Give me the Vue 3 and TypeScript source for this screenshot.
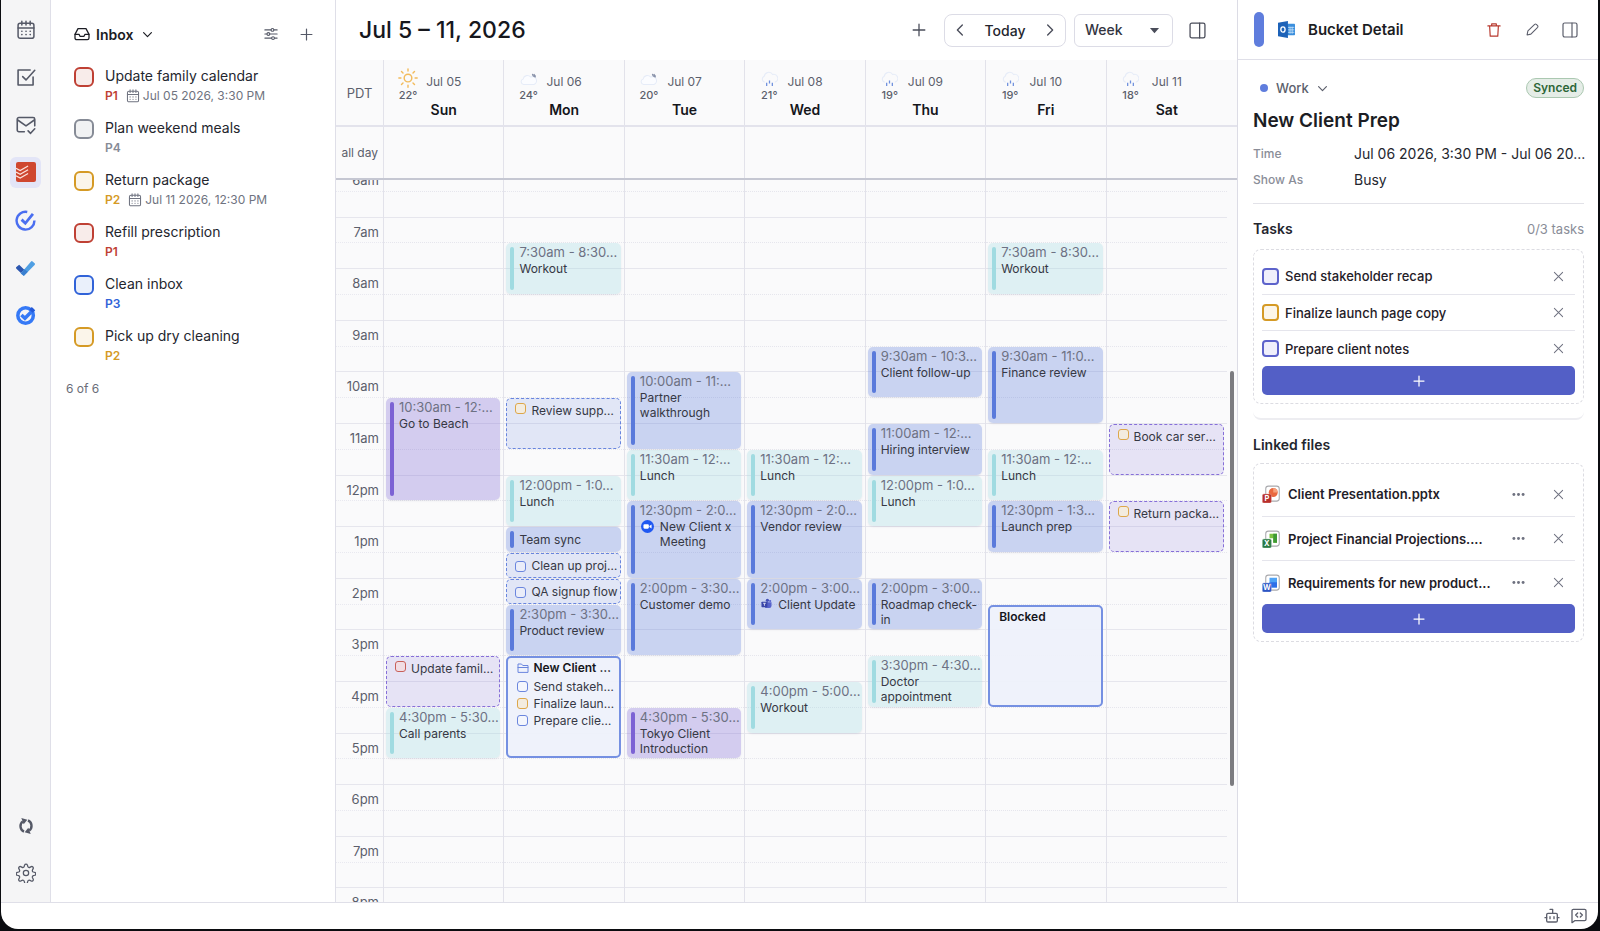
<script setup lang="ts">
import { computed, h, ref, type FunctionalComponent } from 'vue'

const stroke = (body: string, width = 1.5) =>
  `<g fill="none" stroke="currentColor" stroke-width="${width}" stroke-linecap="round" stroke-linejoin="round">${body}</g>`

const office = (tile: string, badge: string, letter: string, art: string) =>
  `<rect x="5" y="1.5" width="18" height="20" rx="3.5" fill="#fff" stroke="#a9a9ad" stroke-width="1.4"/>${art}
   <rect x="0.5" y="12" width="12" height="12" rx="2" fill="${badge}" stroke="${tile}" stroke-width=".6"/>
   <text x="6.5" y="21.6" font-size="10" font-weight="700" font-family="Inter, sans-serif" text-anchor="middle" fill="#fff">${letter}</text>`

const icons: Record<string, string> = {
  calendar: stroke(
    '<rect x="2.5" y="4" width="19" height="18" rx="2.5"/><path d="M2.5 9.5h19M7 1.5V6M12 1.5V6M17 1.5V6"/><path d="M7 13.5h.1M12 13.5h.1M17 13.5h.1M7 17.5h.1M12 17.5h.1M17 17.5h.1" stroke-width="2"/>', 1.8),
  taskCheck: stroke('<path d="M20.5 12v9.500h-18V3.500H17"/><path d="M8 11.500l4 4L22.500 4"/>', 1.9),
  mailCheck: stroke('<path d="M10 20H3.500A2 2 0 0 1 1.500 18V5a2 2 0 0 1 2-2h17a2 2 0 0 1 2 2v8"/><path d="M2 6l10 7 10-7"/><path d="M14.500 19l3 3 5-5.500"/>', 1.9),
  todoist:
    '<rect width="24" height="24" rx="2.500" fill="#cf4730"/><g fill="none" stroke="#fbe3de" stroke-width="1.5"><path d="M0 7.500l5 2.800 9.500-5.600"/><path d="M0 12l5 2.800 9.500-5.600"/><path d="M0 16.500l5 2.800 9.500-5.600"/></g>',
  ticktick:
    '<path d="M14 2.200A10.200 10.200 0 1 0 22.200 12" fill="none" stroke="#4a6ef0" stroke-width="2.800"/><path d="M7.500 11l4.300 4.200L20.500 4.500" fill="none" stroke="#4a6ef0" stroke-width="3.200"/>',
  msTodo:
    '<path d="M4 8.500l6.500 6.300-4.300 4.300L0.500 13.500a1.400 1.400 0 0 1 0-2z" fill="#2c57b0"/><path d="M6 19.500L19 4.300a1.500 1.500 0 0 1 2 0l2.500 2.400a1.400 1.400 0 0 1 0 2L11 21.500a1.600 1.600 0 0 1-2.500 0z" fill="#4f9fe3"/><path d="M6 19.300l4.500-5 4.500 3.200-4 4a1.600 1.600 0 0 1-2.500 0z" fill="#3a7fd0"/>',
  googleTasks:
    '<circle cx="11.500" cy="12.500" r="9.300" fill="none" stroke="#3579f6" stroke-width="4.200"/><path d="M6.500 12l4.200 4L21.500 5" fill="none" stroke="#3579f6" stroke-width="4.200"/><path d="M19 2.500l3.800 3.800-3 3-3.800-3.800z" fill="#2459d8"/>',
  sync:
    '<g fill="none" stroke="currentColor" stroke-width="3.600"><path d="M9 20.300A9 9 0 0 1 7.200 5"/><path d="M15 3.700A9 9 0 0 1 16.800 19"/></g><path d="M5 0l9 2.500L8.500 9.500z" fill="currentColor"/><path d="M19 24l-9-2.500 5.500-7z" fill="currentColor"/>',
  gear: stroke(
    '<circle cx="12" cy="12" r="3.200"/><path d="M10.300 2.500a1.800 1.800 0 0 1 3.400 0l.5 1.700a1.800 1.800 0 0 0 2.500 1l1.500-.8a1.800 1.800 0 0 1 2.400 2.400l-.8 1.500a1.800 1.800 0 0 0 1 2.500l1.700.5a1.800 1.800 0 0 1 0 3.400l-1.700.5a1.800 1.800 0 0 0-1 2.500l.8 1.500a1.800 1.800 0 0 1-2.400 2.400l-1.500-.8a1.800 1.800 0 0 0-2.500 1l-.5 1.700a1.800 1.800 0 0 1-3.400 0l-.5-1.700a1.800 1.800 0 0 0-2.500-1l-1.500.8a1.800 1.800 0 0 1-2.400-2.400l.8-1.500a1.800 1.800 0 0 0-1-2.500l-1.700-.5a1.800 1.800 0 0 1 0-3.400l1.700-.5a1.800 1.800 0 0 0 1-2.500l-.8-1.500a1.800 1.800 0 0 1 2.400-2.400l1.500.8a1.800 1.800 0 0 0 2.500-1z"/>'),
  inbox: stroke('<path d="M1.500 12.500h6l1.500 3h6l1.500-3h6"/><path d="M6 4h12l4.500 8.500V18a2.500 2.500 0 0 1-2.500 2.500H4A2.500 2.500 0 0 1 1.500 18v-5.500z"/>', 1.9),
  chevronDown: stroke('<path d="M3.500 8l8.500 8.500L20.500 8"/>', 2.6),
  chevronLeft: stroke('<path d="M16 3.500L7.500 12l8.500 8.500"/>', 2.3),
  chevronRight: stroke('<path d="M8 3.500l8.500 8.500L8 20.500"/>', 2.3),
  sliders: stroke(
    '<path d="M1.500 5h10.500M17 5h5.500M1.500 12h3.500M10 12h12.500M1.500 19h11.500M18 19h4.500"/><circle cx="14.500" cy="5" r="2.400"/><circle cx="7.500" cy="12" r="2.400"/><circle cx="15.500" cy="19" r="2.400"/>', 1.9),
  plus: stroke('<path d="M12 2v20M2 12h20"/>', 2.5),
  thinPlus: stroke('<path d="M12 2v20M2 12h20"/>', 2.2),
  close: stroke('<path d="M3 3l18 18M21 3L3 21"/>', 2.2),
  caret: '<path d="M2 6.500h20L12 18z" fill="currentColor"/>',
  panel: stroke('<rect x="1.500" y="1.500" width="21" height="21" rx="2.500"/><path d="M15 1.500v21"/>', 1.8),
  trash: stroke('<path d="M1.500 5h21M8 5V1.500h8V5M4.500 5l1 17.500h13l1-17.500"/>', 2),
  pencil: stroke('<path d="M2 22l1.500-7.500L16 2.500q1.500-1.200 3 0l2.500 2.500q1.200 1.500 0 3L9 20.500z"/>', 2),
  dots: '<g fill="currentColor"><circle cx="3.500" cy="12" r="2.700"/><circle cx="12" cy="12" r="2.700"/><circle cx="20.500" cy="12" r="2.700"/></g>',
  robot: stroke('<path d="M9 2h4v5"/><rect x="4" y="8" width="16" height="13" rx="2"/><path d="M1.500 14.500H4M20 14.500h2.500M9 13v3M15 13v3"/>', 2),
  codeBubble: stroke('<path d="M1.500 22V4a2 2 0 0 1 2-2h17a2 2 0 0 1 2 2v13a2 2 0 0 1-2 2h-15z"/><path d="M10 7.500l-3 3 3 3M14 7.500l3 3-3 3"/>', 2),
  folder: stroke('<path d="M2 20V4h7l2.500 3H22v13zM2 11h20"/>', 2),
  outlook:
    '<rect x="9" y="4" width="15" height="16" rx="1" fill="#3b8fdd"/><path d="M14 9h9M14 12.500h9M14 16h9M17 8v10M20 8v10" stroke="#d5e8fa" stroke-width="1"/><path d="M0 2.500L14 0v24L0 21.500z" fill="#1d62b8"/><ellipse cx="7" cy="12" rx="3" ry="3.800" fill="none" stroke="#fff" stroke-width="1.900"/>',
  zoom:
    '<circle cx="12" cy="12" r="12" fill="#1f58f2"/><rect x="4.500" y="8" width="10" height="8" rx="2" fill="#fff"/><path d="M15.500 11l4-2.700v7.400l-4-2.700z" fill="#fff"/>',
  teams:
    '<circle cx="14" cy="5" r="3.500" fill="#4350b8"/><circle cx="20" cy="6.500" r="2.400" fill="#5662cc"/><path d="M9 9h14v8a5 5 0 0 1-5 5H9z" fill="#5662cc"/><rect x="1" y="8" width="13" height="12" rx="1.500" fill="#3a46a8"/><path d="M4.500 11.500h6M7.500 11.500V17" stroke="#fff" stroke-width="1.600"/>',
  sun: '<g fill="none" stroke="#f2bb5c" stroke-width="1.700" stroke-linecap="round"><circle cx="12" cy="12" r="4.600"/><path d="M12 1v2.500M12 20.500V23M1 12h2.500M20.500 12H23M4.200 4.200L6 6M18 18l1.800 1.800M4.200 19.800L6 18M18 6l1.800-1.800"/></g>',
  cloudy:
    '<path d="M5 19a4 4 0 0 1-.5-7.800 6 6 0 0 1 10.500-2.700A5.300 5.300 0 0 1 20 19z" fill="#fbfcff" stroke="#e6ecf8" stroke-width="1.500"/><path d="M17.500 4q.5 4 5 4.500M19.500 4.500l2.500 3" fill="none" stroke="#8a93aa" stroke-width="1.600"/>',
  rain:
    '<path d="M5.500 16a4.500 4.500 0 0 1-1-8.500 6.500 6.500 0 0 1 12-2.500 5.500 5.500 0 0 1 3 11" fill="none" stroke="#e6ecf8" stroke-width="1.500"/><path d="M8 16.500v4.500M12 13.500v4M16 16.500v4.500" stroke="#6f90de" stroke-width="1.800"/>',
  pptx: office('#e8a8a0', '#b8302c', 'P', '<circle cx="15" cy="10" r="6" fill="#e9683f"/><path d="M15 4a6 6 0 0 1 6 6h-6z" fill="#f6a07c"/>'),
  xlsx: office('#a8d0b0', '#2b7a45', 'X', '<path d="M10 5h10v12h-5V11h-5z" fill="#7cc242"/><path d="M15 5h5v12h-5z" fill="#3f9a34"/>'),
  docx: office('#a8b8e8', '#2d55c4', 'W', '<rect x="10" y="5" width="10" height="13" fill="#4fa3f5"/><path d="M10 11h10v7H10z" fill="#2e6fe8"/>'),
}

const Icon: FunctionalComponent<{ name: string; size?: number }> = (props) =>
  h('svg', {
    class: 'icon',
    viewBox: '0 0 24 24',
    width: props.size ?? 16,
    height: props.size ?? 16,
    'aria-hidden': 'true',
    innerHTML: icons[props.name],
  })
Icon.props = ['name', 'size']

const apps = [
  { icon: 'calendar', label: 'Calendar', size: 20 },
  { icon: 'taskCheck', label: 'Tasks', size: 20 },
  { icon: 'mailCheck', label: 'Mail', size: 20 },
  { icon: 'todoist', label: 'Todoist', size: 20 },
  { icon: 'ticktick', label: 'TickTick', size: 21 },
  { icon: 'msTodo', label: 'Microsoft To Do', size: 19 },
  { icon: 'googleTasks', label: 'Google Tasks', size: 20 },
]
const activeApp = ref('Todoist')

interface InboxTask { title: string; priority: number; due?: string; done: boolean }
const inbox = ref<InboxTask[]>([
  { title: 'Update family calendar', priority: 1, due: 'Jul 05 2026, 3:30 PM', done: false },
  { title: 'Plan weekend meals', priority: 4, done: false },
  { title: 'Return package', priority: 2, due: 'Jul 11 2026, 12:30 PM', done: false },
  { title: 'Refill prescription', priority: 1, done: false },
  { title: 'Clean inbox', priority: 3, done: false },
  { title: 'Pick up dry cleaning', priority: 2, done: false },
])
const inboxCount = computed(() => `${inbox.value.length} of ${inbox.value.length}`)

// Shortens a label to a fixed number of characters followed by dots.
const shorten = (text: string, max: number) => (text.length > max ? text.slice(0, max) + '...' : text)

interface CalEvent {
  kind: 'timed' | 'task' | 'bucket'
  tone: 'blue' | 'teal' | 'purple'
  start: number
  end: number
  title: string
  time?: string
  box?: string
  app?: string
  items?: { title: string; box: string }[]
}
const timed = (tone: CalEvent['tone'], start: number, end: number, title: string, time?: string, app?: string): CalEvent =>
  ({ kind: 'timed', tone, start, end, title, time, app })
const task = (tone: CalEvent['tone'], start: number, end: number, title: string, box: string): CalEvent =>
  ({ kind: 'task', tone, start, end, title, box })

const days: { date: string; name: string; weather: string; temp: string; events: CalEvent[] }[] = [
  { date: 'Jul 05', name: 'Sun', weather: 'sun', temp: '22°', events: [
    timed('purple', 10.5, 12.5, 'Go to Beach', '10:30am - 12:30pm'),
    task('purple', 15.5, 16.5, 'Update family calendar', 'red'),
    timed('teal', 16.5, 17.5, 'Call parents', '4:30pm - 5:30pm'),
  ] },
  { date: 'Jul 06', name: 'Mon', weather: 'cloudy', temp: '24°', events: [
    timed('teal', 7.5, 8.5, 'Workout', '7:30am - 8:30am'),
    task('blue', 10.5, 11.5, 'Review support queue', 'amber'),
    timed('teal', 12, 13, 'Lunch', '12:00pm - 1:00pm'),
    timed('blue', 13, 13.5, 'Team sync'),
    task('blue', 13.5, 14, 'Clean up project board', 'blue'),
    task('blue', 14, 14.5, 'QA signup flow', 'blue'),
    timed('blue', 14.5, 15.5, 'Product review', '2:30pm - 3:30pm'),
    { kind: 'bucket', tone: 'blue', start: 15.5, end: 17.5, title: 'New Client Prep', items: [
      { title: 'Send stakeholder recap', box: 'blue' },
      { title: 'Finalize launch page copy', box: 'amber' },
      { title: 'Prepare client notes', box: 'blue' },
    ] },
  ] },
  { date: 'Jul 07', name: 'Tue', weather: 'cloudy', temp: '20°', events: [
    timed('blue', 10, 11.5, 'Partner walkthrough', '10:00am - 11:30am'),
    timed('teal', 11.5, 12.5, 'Lunch', '11:30am - 12:30pm'),
    timed('blue', 12.5, 14, 'New Client x Meeting', '12:30pm - 2:00pm', 'zoom'),
    timed('blue', 14, 15.5, 'Customer demo', '2:00pm - 3:30pm'),
    timed('purple', 16.5, 17.5, 'Tokyo Client Introduction', '4:30pm - 5:30pm'),
  ] },
  { date: 'Jul 08', name: 'Wed', weather: 'rain', temp: '21°', events: [
    timed('teal', 11.5, 12.5, 'Lunch', '11:30am - 12:30pm'),
    timed('blue', 12.5, 14, 'Vendor review', '12:30pm - 2:00pm'),
    timed('blue', 14, 15, 'Client Update', '2:00pm - 3:00pm', 'teams'),
    timed('teal', 16, 17, 'Workout', '4:00pm - 5:00pm'),
  ] },
  { date: 'Jul 09', name: 'Thu', weather: 'rain', temp: '19°', events: [
    timed('blue', 9.5, 10.5, 'Client follow-up', '9:30am - 10:30am'),
    timed('blue', 11, 12, 'Hiring interview', '11:00am - 12:00pm'),
    timed('teal', 12, 13, 'Lunch', '12:00pm - 1:00pm'),
    timed('blue', 14, 15, 'Roadmap check-in', '2:00pm - 3:00pm'),
    timed('teal', 15.5, 16.5, 'Doctor appointment', '3:30pm - 4:30pm'),
  ] },
  { date: 'Jul 10', name: 'Fri', weather: 'rain', temp: '19°', events: [
    timed('teal', 7.5, 8.5, 'Workout', '7:30am - 8:30am'),
    timed('blue', 9.5, 11, 'Finance review', '9:30am - 11:00am'),
    timed('teal', 11.5, 12.5, 'Lunch', '11:30am - 12:30pm'),
    timed('blue', 12.5, 13.5, 'Launch prep', '12:30pm - 1:30pm'),
    { kind: 'bucket', tone: 'blue', start: 14.5, end: 16.5, title: 'Blocked' },
  ] },
  { date: 'Jul 11', name: 'Sat', weather: 'rain', temp: '18°', events: [
    task('purple', 11, 12, 'Book car service', 'amber'),
    task('purple', 12.5, 13.5, 'Return package', 'amber'),
  ] },
]

const firstHour = 6
const hours = Array.from({ length: 15 }, (_, i) => {
  const hour = firstHour + i
  return hour < 12 ? `${hour}am` : `${hour === 12 ? 12 : hour - 12}pm`
})
const place = (e: CalEvent) => ({
  gridRow: `${(e.start - firstHour) * 2 + 1} / ${(e.end - firstHour) * 2 + 1}`,
})

const view = ref('Week')
const bucketTasks = ref([
  { title: 'Send stakeholder recap', box: 'indigo', done: false },
  { title: 'Finalize launch page copy', box: 'amber', done: false },
  { title: 'Prepare client notes', box: 'indigo', done: false },
])
const progress = computed(() => `${bucketTasks.value.filter((t) => t.done).length}/${bucketTasks.value.length} tasks`)
const bucketTime = shorten('Jul 06 2026, 3:30 PM - Jul 06 2026, 5:30 PM', 32)
const files = [
  { name: 'Client Presentation.pptx', icon: 'pptx', max: 30 },
  { name: 'Project Financial Projections.xlsx', icon: 'xlsx', max: 30 },
  { name: 'Requirements for new product launch.docx', icon: 'docx', max: 28 },
]
</script>

<template>
  <div class="window">
    <div class="workspace">
      <nav class="rail" aria-label="Apps">
        <div class="rail-apps">
          <button v-for="a in apps" :key="a.label" class="rail-btn" :class="{ active: a.label === activeApp }"
            :aria-label="a.label" @click="activeApp = a.label">
            <Icon :name="a.icon" :size="a.size" />
          </button>
        </div>
        <div class="rail-tools">
          <button class="rail-btn" aria-label="Sync"><Icon name="sync" :size="16" /></button>
          <button class="rail-btn" aria-label="Settings"><Icon name="gear" :size="20" /></button>
        </div>
      </nav>

      <aside class="inbox">
        <header class="inbox-head">
          <button class="list-pick"><Icon name="inbox" :size="16" /><span>Inbox</span><Icon name="chevronDown" :size="11" /></button>
          <div class="inbox-actions">
            <button aria-label="Filter"><Icon name="sliders" :size="14" /></button>
            <button aria-label="Add task"><Icon name="thinPlus" :size="13" /></button>
          </div>
        </header>
        <ul class="inbox-list">
          <li v-for="(t, i) in inbox" :key="t.title" :class="'p' + t.priority">
            <input :id="'inbox-' + i" v-model="t.done" type="checkbox" />
            <div>
              <label :for="'inbox-' + i">{{ t.title }}</label>
              <p class="meta">
                <b>P{{ t.priority }}</b>
                <span v-if="t.due" class="due"><Icon name="calendar" :size="14" />{{ t.due }}</span>
              </p>
            </div>
          </li>
        </ul>
        <p class="count">{{ inboxCount }}</p>
      </aside>

      <main class="calendar">
        <header class="cal-head">
          <h1>Jul 5 – 11, 2026</h1>
          <div class="cal-tools">
            <button class="bare" aria-label="New event"><Icon name="thinPlus" :size="14" /></button>
            <div class="stepper">
              <button aria-label="Previous week"><Icon name="chevronLeft" :size="14" /></button>
              <button class="today">Today</button>
              <button aria-label="Next week"><Icon name="chevronRight" :size="14" /></button>
            </div>
            <div class="select">
              <select v-model="view" aria-label="View">
                <option>Day</option>
                <option>Week</option>
                <option>Month</option>
              </select>
              <Icon name="caret" :size="11" />
            </div>
            <button class="bare" aria-label="Toggle panel"><Icon name="panel" :size="17" /></button>
          </div>
        </header>

        <div class="row day-row">
          <div class="gutter zone">PDT</div>
          <div v-for="d in days" :key="d.date" class="day">
            <div class="weather"><Icon :name="d.weather" :size="d.weather === 'sun' ? 20 : 17" /><span>{{ d.temp }}</span></div>
            <span class="date">{{ d.date }}</span>
            <strong>{{ d.name }}</strong>
          </div>
        </div>
        <div class="row all-day">
          <div class="gutter">all day</div>
          <div v-for="d in days" :key="d.date" class="cell"></div>
        </div>

        <div class="scroller">
          <div class="row track">
            <div class="gutter hours">
              <div v-for="hr in hours" :key="hr" class="hour"><span>{{ hr }}</span></div>
            </div>
            <div v-for="d in days" :key="d.date" class="column">
              <i v-for="n in 30" :key="n" class="slot" :style="{ gridRow: n }"></i>
              <article v-for="e in d.events" :key="e.title + e.start" class="event"
                :class="[e.kind, e.tone, { short: e.end - e.start < 1 }]" :style="place(e)">
                <template v-if="e.kind === 'timed'">
                  <i class="bar"></i>
                  <div class="body">
                    <p v-if="e.time" class="time" :title="e.time">{{ shorten(e.time, 13) }}</p>
                    <p class="name"><Icon v-if="e.app" :name="e.app" :size="e.app === 'zoom' ? 13 : 11" /><span>{{ e.title }}</span></p>
                  </div>
                </template>
                <template v-else-if="e.kind === 'task'">
                  <input type="checkbox" class="mini" :class="e.box" :aria-label="e.title" />
                  <p class="clip">{{ e.title }}</p>
                </template>
                <template v-else>
                  <p class="bucket-name"><Icon v-if="e.items" name="folder" :size="12" /><span class="clip">{{ e.title }}</span></p>
                  <ul v-if="e.items">
                    <li v-for="it in e.items" :key="it.title">
                      <input type="checkbox" class="mini" :class="it.box" :aria-label="it.title" />
                      <span class="clip">{{ it.title }}</span>
                    </li>
                  </ul>
                </template>
              </article>
            </div>
          </div>
          <div class="thumb"></div>
        </div>
      </main>

      <aside class="detail">
        <header class="detail-head">
          <i class="swatch"></i>
          <Icon name="outlook" :size="17" />
          <h2>Bucket Detail</h2>
          <button class="danger" aria-label="Delete"><Icon name="trash" :size="14" /></button>
          <button aria-label="Edit"><Icon name="pencil" :size="13" /></button>
          <button aria-label="Close panel"><Icon name="panel" :size="16" /></button>
        </header>
        <div class="detail-body">
          <div class="owner">
            <button class="cal-pick"><i class="dot"></i>Work<Icon name="chevronDown" :size="11" /></button>
            <span class="pill">Synced</span>
          </div>
          <h3>New Client Prep</h3>
          <dl>
            <dt>Time</dt>
            <dd>{{ bucketTime }}</dd>
            <dt>Show As</dt>
            <dd>Busy</dd>
          </dl>
          <section class="tasks">
            <div class="sec-head"><h4>Tasks</h4><span>{{ progress }}</span></div>
            <div class="drop">
              <ul>
                <li v-for="(t, i) in bucketTasks" :key="t.title">
                  <input :id="'bucket-' + i" v-model="t.done" type="checkbox" :class="t.box" />
                  <label :for="'bucket-' + i">{{ t.title }}</label>
                  <button aria-label="Remove"><Icon name="close" :size="11" /></button>
                </li>
              </ul>
              <button class="add" aria-label="Add task"><Icon name="plus" :size="12" /></button>
            </div>
          </section>
          <section class="files">
            <div class="sec-head"><h4>Linked files</h4></div>
            <div class="drop">
              <ul>
                <li v-for="f in files" :key="f.name">
                  <Icon :name="f.icon" :size="18" />
                  <a href="#" :title="f.name">{{ shorten(f.name, f.max) }}</a>
                  <button aria-label="More"><Icon name="dots" :size="13" /></button>
                  <button aria-label="Remove"><Icon name="close" :size="11" /></button>
                </li>
              </ul>
              <button class="add" aria-label="Add file"><Icon name="plus" :size="12" /></button>
            </div>
          </section>
        </div>
      </aside>
    </div>
    <footer class="status">
      <button aria-label="Assistant"><Icon name="robot" :size="16" /></button>
      <button aria-label="Feedback"><Icon name="codeBubble" :size="16" /></button>
    </footer>
  </div>
</template>

<style>
body { margin: 0; background: #0b0c10; }
.icon { display: block; flex: none; }
</style>

<style scoped>
* { box-sizing: border-box; }
p, h1, h2, h3, h4, ul, dl, dd { margin: 0; padding: 0; }
ul { list-style: none; }
button { border: 0; padding: 0; background: none; font: inherit; color: inherit; cursor: pointer; display: flex; align-items: center; justify-content: center; }
input { appearance: none; margin: 0; flex: none; }
a { color: inherit; text-decoration: none; }

.window {
  height: calc(100vh - 2px);
  margin: 0 2px 2px 1px;
  display: flex;
  flex-direction: column;
  overflow: hidden;
  background: #fff;
  border-radius: 0 0 17px 17px;
  font-family: Inter, "Liberation Sans", sans-serif;
  font-size: 14px;
  color: #24262e;
}
.workspace { flex: 1; min-height: 0; display: flex; }

.rail {
  width: 50px;
  flex: none;
  padding: 14px 0;
  display: flex;
  flex-direction: column;
  align-items: center;
  justify-content: space-between;
  background: #f5f5f6;
  border-right: 1px solid #dfdfe8;
  color: #555967;
}
.rail-apps { display: flex; flex-direction: column; justify-content: space-between; height: 317px; }
.rail-tools { display: flex; flex-direction: column; gap: 16px; }
.rail-btn { width: 31px; height: 31px; border-radius: 6px; }
.rail-btn.active { background: #e3e5f7; }

.inbox { width: 285px; flex: none; padding: 23px 14px 0 15px; border-right: 1px solid #dfdfe8; }
.inbox-head { display: flex; justify-content: space-between; align-items: center; height: 22px; padding: 0 8px; }
.list-pick { gap: 6px; font-weight: 600; color: #1c1d24; }
.list-pick span { margin-right: 3px; }
.inbox-actions { display: flex; gap: 22px; color: #555967; }
.inbox-list { padding: 20px 0 0 8px; }
.inbox-list li { display: flex; gap: 11px; height: 52px; --c: #868b96; --bg: #f1f2f3; }
.inbox-list .p1 { --c: #bf4034; --bg: #f8ecea; }
.inbox-list .p2 { --c: #d59a25; --bg: #fbf5ea; }
.inbox-list .p3 { --c: #3163d8; --bg: #eaf0fb; }
.inbox-list input { width: 20px; height: 20px; margin-top: 2px; border: 2px solid var(--c); border-radius: 6px; background: var(--bg); }
.inbox-list label { display: block; line-height: 21px; font-size: 14px; }
.meta { display: flex; align-items: center; gap: 8px; line-height: 20px; font-size: 12px; color: #6f7380; }
.meta b { font-weight: 600; color: var(--c); }
.due { display: flex; align-items: center; gap: 3px; }
.count { line-height: 18px; font-size: 12px; color: #6a6d78; padding-top: 3px; }

.calendar { flex: 1; min-width: 0; display: flex; flex-direction: column; background: #fafafb; }
.cal-head { height: 60px; flex: none; display: flex; justify-content: space-between; align-items: center; padding: 0 31px 0 23px; background: #fff; }
h1 { font-size: 23px; font-weight: 500; line-height: 28px; color: #16171d; }
.cal-tools { display: flex; align-items: center; color: #4a4d5a; }
.bare { width: 18px; height: 32px; }
.stepper { display: flex; justify-content: space-between; width: 122px; height: 33px; margin-left: 16px; padding: 0 8px; border: 1px solid #dcdce6; border-radius: 8px; }
.stepper .today { font-size: 14px; font-weight: 500; color: #24262e; }
.select { width: 99px; height: 33px; margin: 0 15px 0 8px; display: grid; align-items: center; border: 1px solid #dcdce6; border-radius: 6px; }
.select select { grid-area: 1 / 1; height: 31px; padding: 0 10px; border: 0; background: none; appearance: none; font: 500 14px/20px Inter, sans-serif; color: #33353f; }
.select .icon { grid-area: 1 / 1; justify-self: end; margin-right: 12px; pointer-events: none; }

.row { display: grid; grid-template-columns: 48px repeat(7, 1fr); padding-right: 10px; }
.gutter { border-right: 1px solid #e2e2ea; color: #5c5f6c; font-size: 13px; }
.day-row { flex: none; height: 67px; border-bottom: 2px solid #e3e3ec; }
.zone { display: flex; align-items: center; justify-content: center; }
.day { display: grid; grid-template-columns: 1fr auto 1fr; grid-template-rows: 41px 18px; border-right: 1px solid #e2e2ea; }
.day:last-child, .cell:last-child, .column:last-child { border-right: 0; }
.weather { display: flex; flex-direction: column; justify-content: flex-end; align-items: center; justify-self: start; width: 20px; margin-left: 14px; font-size: 11px; line-height: 12px; font-weight: 500; color: #5c5f6c; }
.weather .icon { margin-bottom: 1px; }
.date { padding-top: 13px; line-height: 18px; font-size: 12px; color: #5c5f6c; }
.day strong { grid-column: 1 / -1; text-align: center; line-height: 18px; font-weight: 600; color: #15161b; }
.all-day { flex: none; height: 53px; border-bottom: 2px solid #c5c7d2; }
.all-day .gutter { display: flex; align-items: center; justify-content: flex-end; padding-right: 5px; font-size: 12px; }
.cell { border-right: 1px solid #e2e2ea; }

.scroller { position: relative; flex: 1; min-height: 0; overflow: hidden; }
.track { height: 774px; margin-top: -15px; }
.hours { display: grid; grid-template-rows: repeat(15, 1fr); }
.hour { border-top: 1px solid #e6e6ed; padding: 4px 4px 0 0; text-align: right; line-height: 20px; background: repeating-linear-gradient(90deg, #e9e9f0 0 1px, transparent 1px 2px) 0 50% / 100% 1px no-repeat; }
.column { display: grid; grid-template-rows: repeat(30, 1fr); grid-template-columns: minmax(0, 1fr); border-right: 1px solid #e2e2ea; }
.slot { grid-column: 1; min-height: 0; border-top: 1px solid #e6e6ed; }
.slot:nth-of-type(even) { border-top: 1px dotted #e6e6ed; }

.event {
  grid-column: 1;
  min-height: 0;
  margin: 1px 3px 0 2px;
  display: flex;
  overflow: hidden;
  border-radius: 5px;
  font-size: 12px;
  line-height: 15px;
  color: #363844;
  box-shadow: 0 1px 2px rgba(70, 70, 110, .1);
  --c: 90, 122, 219;
  background: rgba(var(--c), .3);
}
.event.purple { --c: 124, 98, 212; }
.event.teal { --c: 160, 219, 225; }
.bar { width: 4px; flex: none; margin: 4px 0 4px 4px; border-radius: 2px; background: rgb(var(--c)); }
.body { flex: 1; min-width: 0; padding: 1px 0 0 5px; }
.short .body { padding-top: 5px; }
.time { line-height: 16px; margin-bottom: 1px; font-size: 13px; color: #6d7183; white-space: nowrap; }
.name { display: flex; gap: 6px; }
.name .icon { margin: 1px 0 0 1px; }
.clip { min-width: 0; flex: 1; white-space: nowrap; overflow: hidden; text-overflow: ellipsis; }
.event.task { background: rgba(var(--c), .15); border: 1px dashed rgba(var(--c), .9); box-shadow: none; padding: 3px 1px 0 8px; gap: 5px; }
.event.task .clip { line-height: 18px; }
.mini { width: 11px; height: 11px; border: 1px solid #6b86de; border-radius: 3px; background: rgba(255, 255, 255, .3); }
.mini.red { border-color: #c8605a; background: #f1dde4; }
.mini.amber { border-color: #dda74a; background: #f3ecdf; }
.event.task .mini { margin-top: 1px; }
.event.task.short .mini { margin-top: 4px; }
.event.task.short { padding-right: 0; }
.event.bucket { display: block; background: rgba(238, 241, 251, .95); border: 2px solid #7590e2; box-shadow: none; padding: 1px 4px 0 9px; }
.bucket-name { display: flex; align-items: center; gap: 4px; line-height: 18px; font-weight: 600; color: #15161b; }
.bucket-name .icon { color: #6b86de; }
.event ul { padding-top: 1px; }
.event li { display: flex; align-items: center; gap: 5px; line-height: 17px; }
.thumb { position: absolute; right: 3px; top: 26.5%; bottom: 16%; width: 4px; border-radius: 2px; background: #7c7c80; }

.detail { width: 361px; flex: none; border-left: 1px solid #dcdce5; }
.detail-head { height: 60px; display: flex; align-items: center; padding: 0 20px 0 16px; border-bottom: 1px solid #dfdfe8; color: #5c5f6c; }
.swatch { width: 10px; height: 35px; margin-right: 14px; border-radius: 5px; background: #5f7ddd; }
h2 { flex: 1; margin-left: 13px; font-size: 15px; line-height: 20px; font-weight: 600; color: #1c1d24; }
.detail-head button { width: 16px; height: 32px; margin-left: 22px; }
.detail-head .danger { color: #b8392e; }
.detail-body { padding: 17px 14px 0 15px; }
.owner { display: flex; justify-content: space-between; align-items: center; height: 22px; }
.cal-pick { font-size: 13px; font-weight: 500; color: #5c5f6c; padding-left: 7px; }
.dot { width: 8px; height: 8px; margin-right: 8px; border-radius: 50%; background: #5f7ddd; }
.cal-pick .icon { margin-left: 8px; }
.pill { height: 20px; padding: 0 6px; border: 1px solid #abc8b1; border-radius: 10px; background: #e5ede7; color: #2d6638; font-size: 12px; line-height: 18px; font-weight: 600; }
h3 { margin-top: 9px; font-size: 19px; line-height: 26px; font-weight: 600; color: #1c1d24; }
dl { display: grid; grid-template-columns: 101px minmax(0, 1fr); row-gap: 6px; margin-top: 10px; padding-bottom: 13px; border-bottom: 1px solid #e2e2e8; line-height: 20px; }
dt { font-size: 12px; font-weight: 500; color: #8a8d98; }
dd { font-size: 14px; white-space: nowrap; }
.tasks { padding: 15px 0 14px; border-bottom: 2px solid #ededf1; border-radius: 0 0 8px 8px; }
.files { padding-top: 15px; }
.sec-head { display: flex; justify-content: space-between; align-items: center; line-height: 20px; }
.sec-head h4 { font-size: 14px; font-weight: 600; }
.sec-head span { font-size: 13px; color: #8a8d98; }
.drop { margin-top: 10px; padding: 8px; border: 1px dashed #dcdce2; border-radius: 8px; }
.drop li { display: flex; align-items: center; height: 36px; font-size: 13px; font-weight: 500; color: #1f2028; }
.drop li + li { border-top: 1px solid #e5e5ec; }
.drop input { width: 17px; height: 17px; margin-right: 6px; border: 2px solid #5d63cb; border-radius: 4px; background: #efeffb; }
.drop input.amber { border-color: #d59a25; background: #fcf6ea; }
.drop label { flex: 1; }
.drop li button { width: 13px; height: 20px; margin-right: 10px; color: #6f7280; }
.drop .add { width: 100%; height: 29px; border-radius: 5px; background: #535fc6; color: #fff; }
.files .drop { margin-top: 8px; }
.files li { height: 44px; }
.files a { flex: 1; min-width: 0; margin: 0 10px 0 8px; font-weight: 600; white-space: nowrap; }
.files li button + button { margin-left: 17px; }

.status { height: 27px; flex: none; display: flex; align-items: center; justify-content: flex-end; gap: 11px; padding: 0 11px; border-top: 1px solid #dfdfe8; color: #5c5f6c; }
</style>
